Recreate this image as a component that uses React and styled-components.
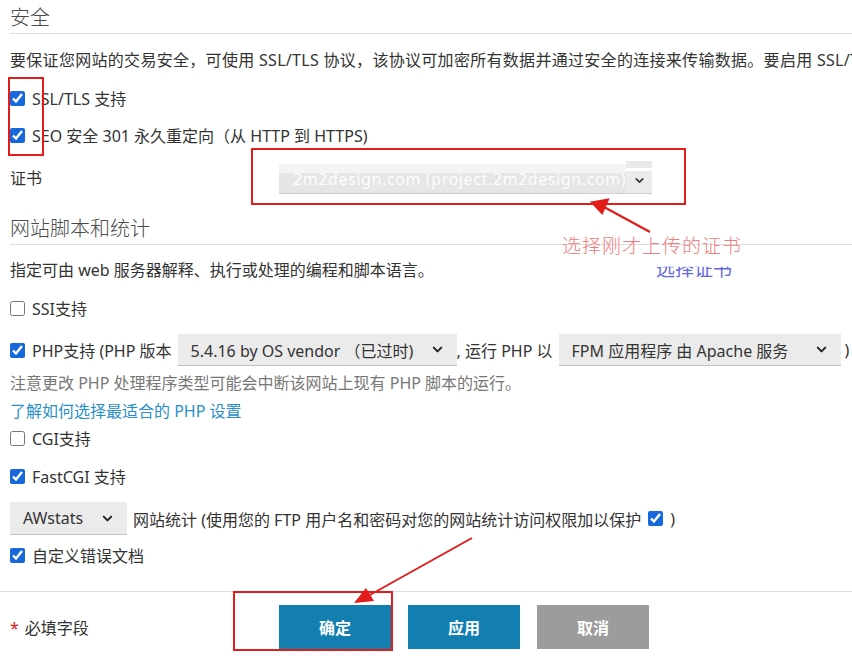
import React from "react";
import styled, { createGlobalStyle } from "styled-components";
import { ChevronDown } from "lucide-react";

const Global = createGlobalStyle`
  html, body { margin: 0; padding: 0; background: #fff; }
  body { font-family: "Noto Sans", "Noto Sans CJK SC", sans-serif; color: #333; }
`;

const Page = styled.div`
  position: relative;
  width: 852px;
  height: 661px;
  overflow: hidden;
  padding-left: 10px;
  box-sizing: border-box;
  display: flex;
  flex-direction: column;
`;

const SectionTitle = styled.div`
  font-size: 20px;
  line-height: 33px;
  height: 33px;
  color: #4a4a4a;
  border-bottom: 1px solid #ddd;
  margin-top: ${(p) => p.$top || 0}px;
  font-family: "Noto Sans CJK SC", sans-serif;
  font-weight: 300;
`;

const Text = styled.div`
  font-size: 16px;
  line-height: 20px;
  height: 20px;
  white-space: nowrap;
  margin-top: ${(p) => p.$top || 0}px;
  color: ${(p) => p.$color || "#333"};
  letter-spacing: ${(p) => p.$ls || 0}px;
`;

const Link = styled(Text)`
  color: #2a8fc9;
`;

const CheckRow = styled.label`
  display: flex;
  align-items: center;
  gap: 7px;
  height: ${(p) => p.$h || 20}px;
  margin-top: ${(p) => p.$top || 0}px;
  font-size: 16px;
  white-space: nowrap;
  color: #333;
`;

const Box = styled.input.attrs({ type: "checkbox" })`
  width: 15px;
  height: 15px;
  margin: 0;
  accent-color: #1668dc;
  flex: none;
`;

const Row = styled.div`
  display: flex;
  align-items: center;
  height: ${(p) => p.$h || 32}px;
  margin-top: ${(p) => p.$top || 0}px;
  font-size: 16px;
  white-space: nowrap;
`;

const Label = styled.div`
  width: ${(p) => p.$w}px;
  flex: none;
  font-size: 16px;
`;

const Select = styled.div`
  display: flex;
  align-items: center;
  justify-content: space-between;
  width: ${(p) => p.$w}px;
  height: ${(p) => p.$h || 32}px;
  box-sizing: border-box;
  padding: 0 12px 0 13px;
  background: #ebebeb;
  border-bottom: 1px solid #c2c2c2;
  font-size: 16px;
  color: #333;
  flex: none;
  margin: ${(p) => p.$m || "0"};
`;

const CertWrap = styled.div`
  display: flex;
  align-items: flex-end;
  height: 34px;
`;

const CertSelect = styled.div`
  width: 347px;
  height: 30px;
  box-sizing: border-box;
  background: linear-gradient(#f4f4f4 0 30%, #e6e6e6 30%);
  border-bottom: 1px solid #cfcfcf;
  color: #fdfdfd;
  font-size: 16px;
  line-height: 30px;
  padding-left: 14px;
  letter-spacing: 0.6px;
  text-shadow: 0 0 1px #e4e4e4;
`;

const CertArrow = styled.div`
  width: 26px;
  height: 33px;
  box-sizing: border-box;
  background: linear-gradient(#eaeaea 0 22%, #fff 22% 30%, #ececec 30%);
  border-bottom: 1px solid #cfcfcf;
  display: flex;
  align-items: flex-end;
  justify-content: center;
  padding-bottom: 6px;
  color: #333;
`;

const Divider = styled.div`
  border-top: 1px solid #ddd;
  margin-top: ${(p) => p.$top || 0}px;
  margin-left: -10px;
`;

const Footer = styled.div`
  display: flex;
  align-items: center;
  margin-top: 13px;
  height: 44px;
`;

const Required = styled.div`
  width: 269px;
  font-size: 16px;
  color: #333;
  span { color: #e02020; margin-right: 6px; }
`;

const Buttons = styled.div`
  display: flex;
  gap: 17px;
`;

const Button = styled.div`
  width: 112px;
  height: 44px;
  display: flex;
  align-items: center;
  justify-content: center;
  background: ${(p) => (p.$grey ? "#9c9c9c" : "#137fb1")};
  color: #fff;
  font-weight: 700;
  font-size: 16px;
  font-family: "Noto Sans CJK SC", sans-serif;
`;

const RedBox = styled.div`
  position: absolute;
  left: ${(p) => p.$x}px;
  top: ${(p) => p.$y}px;
  width: ${(p) => p.$w}px;
  height: ${(p) => p.$h}px;
  border: 2px solid #e21b1b;
  box-sizing: border-box;
  pointer-events: none;
`;

const Overlay = styled.svg`
  position: absolute;
  left: 0;
  top: 0;
  pointer-events: none;
`;

const Note = styled.div`
  position: absolute;
  left: 562px;
  top: 232px;
  font-size: 19px;
  line-height: 26px;
  color: #f07c7c;
  font-family: "Noto Sans CJK SC", sans-serif;
  font-weight: 300;
  letter-spacing: 1px;
  white-space: nowrap;
`;

const Ghost = styled.div`
  position: absolute;
  left: 656px;
  top: 256px;
  font-size: 19px;
  line-height: 24px;
  color: #3a44d8;
  font-family: "Noto Sans CJK SC", sans-serif;
  clip-path: inset(45% 0 0 0);
  opacity: 0.8;
  white-space: nowrap;
`;

const Chev = () => <ChevronDown size={15} strokeWidth={3.2} color="#222" />;

export default function App() {
  return (
    <>
      <Global />
      <Page>
        <SectionTitle>安全</SectionTitle>
        <Text $top={16} $ls={0.3}>
          要保证您网站的交易安全，可使用 SSL/TLS 协议，该协议可加密所有数据并通过安全的连接来传输数据。要启用 SSL/TLS 支持，请选择证书。
        </Text>
        <CheckRow $top={18}>
          <Box defaultChecked />
          SSL/TLS 支持
        </CheckRow>
        <CheckRow $top={17}>
          <Box defaultChecked />
          SEO 安全 301 永久重定向（从 HTTP 到 HTTPS)
        </CheckRow>
        <Row $top={15} $h={34}>
          <Label $w={269}>证书</Label>
          <CertWrap>
            <CertSelect>2m2design.com (project.2m2design.com)</CertSelect>
            <CertArrow>
              <ChevronDown size={13} strokeWidth={3} />
            </CertArrow>
          </CertWrap>
        </Row>
        <SectionTitle $top={17}>网站脚本和统计</SectionTitle>
        <Text $top={15}>指定可由 web 服务器解释、执行或处理的编程和脚本语言。</Text>
        <CheckRow $top={18}>
          <Box />
          SSI支持
        </CheckRow>
        <CheckRow $top={16} $h={32}>
          <Box defaultChecked />
          <span>PHP支持 (PHP 版本</span>
          <Select $w={279} $m="0 0 0 -1px">
            <span>5.4.16 by OS vendor （已过时)</span>
            <Chev />
          </Select>
          <span style={{ marginLeft: -7 }}>, 运行 PHP 以</span>
          <Select $w={282} $m="0 0 0 -1px">
            <span>FPM 应用程序 由 Apache 服务</span>
            <Chev />
          </Select>
          <span style={{ marginLeft: -3 }}>)</span>
        </CheckRow>
        <Text $top={7} $color="#777">
          注意更改 PHP 处理程序类型可能会中断该网站上现有 PHP 脚本的运行。
        </Text>
        <Link $top={8}>了解如何选择最适合的 PHP 设置</Link>
        <CheckRow $top={7}>
          <Box />
          CGI支持
        </CheckRow>
        <CheckRow $top={18}>
          <Box defaultChecked />
          FastCGI 支持
        </CheckRow>
        <Row $top={16} $h={33}>
          <Select $w={117} $h={33}>
            <span>AWstats</span>
            <Chev />
          </Select>
          <CheckRow style={{ marginLeft: 6 }}>
            网站统计 (使用您的 FTP 用户名和密码对您的网站统计访问权限加以保护
            <Box defaultChecked />)
          </CheckRow>
        </Row>
        <CheckRow $top={10}>
          <Box defaultChecked />
          自定义错误文档
        </CheckRow>
        <Divider $top={26} />
        <Footer>
          <Required>
            <span>*</span>必填字段
          </Required>
          <Buttons>
            <Button>确定</Button>
            <Button>应用</Button>
            <Button $grey>取消</Button>
          </Buttons>
        </Footer>

        <RedBox $x={8} $y={77} $w={36} $h={79} />
        <RedBox $x={251} $y={148} $w={435} $h={57} />
        <RedBox $x={233} $y={591} $w={160} $h={60} />
        <Note>选择刚才上传的证书</Note>
        <Ghost>选择证书</Ghost>
        <Overlay width="852" height="661" viewBox="0 0 852 661">
          <line x1="650" y1="232" x2="604" y2="207" stroke="#e21b1b" strokeWidth="2.2" />
          <polygon points="591,200 611,200 601,215" fill="#e21b1b" transform="rotate(-10 601 207)" />
          <line x1="472" y1="538" x2="368" y2="596" stroke="#e21b1b" strokeWidth="2" />
          <polygon points="354,603 366,588 374,601" fill="#e21b1b" />
        </Overlay>
      </Page>
    </>
  );
}
